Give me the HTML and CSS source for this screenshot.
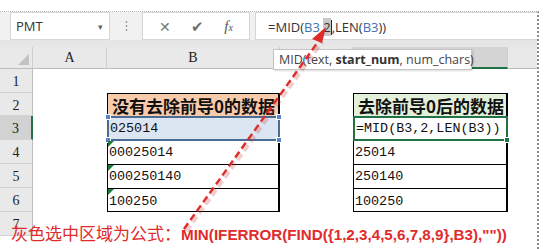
FILE: index.html
```html
<!DOCTYPE html>
<html lang="zh-CN">
<head>
    <meta charset="UTF-8">
    <title>MID 去除前导0</title>
    <link rel="stylesheet" href="styles.css">
</head>
<body>
    <div class="frame">
        <div class="formula-bar">
            <div class="name-box">
                <span>PMT</span>
                <span class="caret">&#9662;</span>
            </div>
            <div class="grip"></div>
            <div class="fx-buttons">
                <span class="btn-x">&#10005;</span>
                <span class="btn-ok">&#10004;</span>
                <span class="btn-fx"><i>f</i><small>x</small></span>
            </div>
            <div class="formula-input">
                =MID(<span class="ref">B3</span>,<span class="sel">2</span><span class="cursor"></span>,LEN(<span class="ref">B3</span>))
            </div>
        </div>
        <div class="band"></div>

        <div class="sheet">
            <div class="col-head corner"><span class="corner-tri"></span></div>
            <div class="col-head">A</div>
            <div class="col-head">B</div>
            <div class="col-head">C</div>
            <div class="col-head active">D</div>
            <div class="col-head last"></div>

            <div class="row-head r1">1</div>
            <div class="row-head r2">2</div>
            <div class="row-head r3 active">3</div>
            <div class="row-head r4">4</div>
            <div class="row-head r5">5</div>
            <div class="row-head r6">6</div>
            <div class="row-head r7">7</div>

            <div class="data-table col-b">
                <div class="cell head peach">没有去除前导0的数据</div>
                <div class="cell picked">025014
                    <span class="knob tl"></span><span class="knob bl"></span>
                    <span class="knob tr"></span><span class="knob br"></span>
                </div>
                <div class="cell"><span class="tri"></span>00025014</div>
                <div class="cell"><span class="tri"></span>000250140</div>
                <div class="cell"><span class="tri"></span>100250</div>
            </div>

            <div class="data-table col-d">
                <div class="cell head green">去除前导0后的数据</div>
                <div class="cell current">=MID(B3,2,LEN(B3))<span class="fill-handle"></span></div>
                <div class="cell">25014</div>
                <div class="cell">250140</div>
                <div class="cell">100250</div>
            </div>
        </div>

        <div class="tooltip">MID(text, <b>start_num</b>, num_chars)</div>

        <svg class="arrow" width="550" height="249" viewBox="0 0 550 249">
            <line x1="186" y1="230" x2="322" y2="40" stroke="rgba(200,60,60,0.25)" stroke-width="5" stroke-dasharray="7 4"/>
            <line x1="184" y1="228" x2="320" y2="38" stroke="#e02b2b" stroke-width="2.4" stroke-dasharray="7 4"/>
            <polygon points="326,26 312,38 322,42" fill="#e02b2b"/>
        </svg>

        <div class="note">灰色选中区域为公式：<b>MIN(IFERROR(FIND({1,2,3,4,5,6,7,8,9},B3),""))</b><br>返回的结果</div>
    </div>
</body>
</html>
```

FILE: styles.css
```css
* {
    margin: 0;
    padding: 0;
    box-sizing: border-box;
}

body {
    width: 550px;
    height: 249px;
    overflow: hidden;
    background: #fff;
    font-family: 'Open Sans', 'Liberation Sans', 'Noto Sans CJK SC', sans-serif;
}

.frame {
    position: relative;
    margin-top: 11px;
    width: 539px;
    height: 238px;
    overflow: hidden;
    background: #fff;
    border-top: 1px dotted #b8b8b8;
    border-right: 2px dotted #8a8a8a;
}

/* formula bar */
.formula-bar {
    display: flex;
    align-items: stretch;
    height: 28px;
    background: #f1f1f1;
}

.name-box {
    display: flex;
    align-items: center;
    justify-content: space-between;
    margin-left: 10px;
    width: 100px;
    padding: 0 6px 0 5px;
    background: #fff;
    border: 1px solid #d6d6d6;
    font-size: 13px;
    color: #333;
}

.caret {
    font-size: 9px;
    color: #666;
}

.grip {
    width: 32px;
    margin: 8px 0;
    background: radial-gradient(circle, #9a9a9a 0.8px, transparent 1.2px);
    background-size: 3px 4px;
    background-position: 15px 0;
    background-repeat: repeat-y;
}

.fx-buttons {
    display: flex;
    align-items: center;
    justify-content: space-around;
    width: 108px;
    background: #fff;
    border: 1px solid #d6d6d6;
    padding: 0 6px;
    color: #777;
}

.btn-x {
    font-size: 14px;
}

.btn-ok {
    font-size: 15px;
    color: #6d6d6d;
}

.btn-fx {
    font-family: 'Liberation Serif', serif;
    font-size: 15px;
    color: #555;
}

.btn-fx small {
    font-size: 10px;
    font-style: italic;
}

.formula-input {
    flex: 1;
    margin-left: 5px;
    padding: 5px 0 0 12px;
    background: #fff;
    border: 1px solid #d6d6d6;
    border-right: none;
    font-size: 13px;
    color: #333;
    white-space: nowrap;
}

.formula-input .ref {
    color: #3f6fb5;
}

.formula-input .sel {
    background: #c9c9c9;
}

.formula-input .cursor {
    display: inline-block;
    width: 1px;
    height: 15px;
    background: #222;
    vertical-align: -3px;
}

.band {
    height: 7px;
    background: #e6e6e6;
}

/* sheet grid */
.sheet {
    display: grid;
    grid-template-columns: 33px 74px 173px 73px 155px 1fr;
    grid-template-rows: 22px 24px 23px 24px 24px 24px 24px 24px;
}

.col-head {
    display: flex;
    align-items: center;
    justify-content: center;
    background: #e9e9e9;
    border-right: 1px solid #cfcfcf;
    border-bottom: 1px solid #bdbdbd;
    font-family: 'Liberation Serif', serif;
    font-size: 14px;
    color: #222;
}

.col-head.active {
    background: #d4d4d4;
    border-bottom: 2px solid #217346;
}

.col-head.last {
    border-right: none;
}

.corner {
    position: relative;
}

.corner-tri {
    position: absolute;
    right: 3px;
    bottom: 3px;
    border-left: 11px solid transparent;
    border-bottom: 11px solid #c2c2c2;
}

.row-head {
    grid-column: 1;
    display: flex;
    align-items: center;
    justify-content: center;
    padding-top: 3px;
    background: #e9e9e9;
    border-right: 1px solid #bdbdbd;
    border-bottom: 1px solid #d4d4d4;
    font-family: 'Liberation Serif', serif;
    font-size: 14px;
    color: #222;
}

.row-head.active {
    background: #d2d2d2;
    border-right: 2px solid #217346;
}

.r1 { grid-row: 2; }
.r2 { grid-row: 3; }
.r3 { grid-row: 4; }
.r4 { grid-row: 5; }
.r5 { grid-row: 6; }
.r6 { grid-row: 7; }
.r7 { grid-row: 8; }

/* data tables */
.data-table {
    grid-row: 3 / 8;
    display: grid;
    grid-template-rows: 23px 24px 24px 24px 24px;
    border: 1px solid #000;
    border-right-width: 2px;
}

.col-b { grid-column: 3; }
.col-d { grid-column: 5; }

.cell {
    position: relative;
    display: flex;
    align-items: center;
    padding-left: 1px;
    border-bottom: 1px solid #000;
    font-family: 'Liberation Mono', monospace;
    font-size: 13.4px;
    color: #111;
    white-space: nowrap;
}

.cell:last-child {
    border-bottom: none;
}

.cell.head {
    padding-left: 4px;
    font-family: 'Noto Sans CJK SC', sans-serif;
    font-size: 17px;
    font-weight: 700;
    line-height: 1;
}

.peach {
    background: #f8cbad;
}

.green {
    background: #e2efda;
}

.picked {
    background: #dce6f2;
    border: 2px solid #4a6b93;
    margin: -1px -2px 0 -1px;
}

.knob {
    position: absolute;
    width: 6px;
    height: 6px;
    background: #5b85c4;
    border: 1px solid #fff;
}

.knob.tl { left: -4px; top: -4px; }
.knob.bl { left: -4px; bottom: -4px; }
.knob.tr { right: -4px; top: -4px; }
.knob.br { right: -4px; bottom: -4px; }

.current {
    border: 2px solid #217346;
    margin: -1px -2px 0 -1px;
}

.fill-handle {
    position: absolute;
    right: -4px;
    bottom: -4px;
    width: 6px;
    height: 6px;
    background: #217346;
    border: 1px solid #fff;
}

.tri {
    position: absolute;
    left: 0;
    top: 0;
    border-top: 6px solid #1f7a3a;
    border-right: 6px solid transparent;
}

/* overlays */
.tooltip {
    position: absolute;
    left: 273px;
    top: 37px;
    width: 199px;
    height: 21px;
    padding: 1px 0 0 5px;
    background: #fff;
    border: 1px solid #c4c4c4;
    box-shadow: 1px 1px 2px rgba(0, 0, 0, 0.15);
    font-size: 12.5px;
    color: #444;
    white-space: nowrap;
}

.tooltip b {
    color: #333;
}

.arrow {
    position: absolute;
    left: 0;
    top: -11px;
    pointer-events: none;
}

.note {
    position: absolute;
    left: 11px;
    top: 209px;
    font-family: 'Noto Sans CJK SC', sans-serif;
    font-size: 17px;
    line-height: 24px;
    color: #e02b2b;
    white-space: nowrap;
}

.note b {
    font-family: 'Liberation Sans', Arial, sans-serif;
    font-size: 15.2px;
    font-weight: 700;
}
```
